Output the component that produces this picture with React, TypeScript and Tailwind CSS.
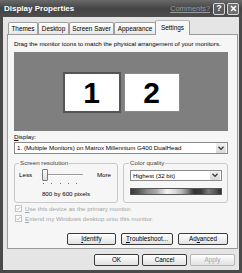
import React from "react";

// Windows XP "Display Properties" dialog, Settings tab (grayscale)

const tabs = [
  { label: "Themes", w: "w-[30px]" },
  { label: "Desktop", w: "w-[31px]" },
  { label: "Screen Saver", w: "w-[45px]" },
  { label: "Appearance", w: "w-[42px]" },
];

const XpButton: React.FC<{ children: React.ReactNode; disabled?: boolean; className?: string }> = ({
  children,
  disabled,
  className = "",
}) => (
  <div
    className={`flex h-[12px] items-center justify-center rounded-[2px] border bg-gradient-to-b from-white to-[#e2e2e2] text-[6.3px] leading-none ${
      disabled ? "border-[#b4b4b4] text-[#a8a8a8]" : "border-[#3a3a3a] text-black"
    } ${className}`}
  >
    {children}
  </div>
);

const DropArrow: React.FC = () => (
  <div className="flex h-full w-[10px] items-center justify-center rounded-[1px] bg-gradient-to-b from-[#f2f2f2] to-[#d6d6d6]">
    <svg width="6" height="5" viewBox="0 0 6 5">
      <path d="M0.5 0.8 L3 3.4 L5.5 0.8" fill="none" stroke="#333" strokeWidth="1.3" />
    </svg>
  </div>
);

const Check: React.FC<{ label: React.ReactNode }> = ({ label }) => (
  <div className="flex h-[9px] items-center gap-[3px] text-[6.2px] text-[#a4a4a4]">
    <div className="flex h-[7px] w-[7px] items-center justify-center border border-[#c4c4c4] bg-white">
      <svg width="5" height="5" viewBox="0 0 5 5">
        <path d="M0.6 2.4 L1.9 3.7 L4.4 1" fill="none" stroke="#b4b4b4" strokeWidth="1" />
      </svg>
    </div>
    <span>{label}</span>
  </div>
);

export default function App() {
  return (
    <div className="flex h-[273px] w-[242px] flex-col overflow-hidden bg-[#4a4a4a] font-['Liberation_Sans',Arial,sans-serif]">
      {/* title bar */}
      <div className="flex h-[17px] items-center bg-gradient-to-b from-[#6a6a6a] via-[#444] to-[#4e4e4e] pl-[4px] pr-[3px]">
        <span className="text-[8px] font-bold text-white">Display Properties</span>
        <span className="ml-auto mr-[3px] text-[7.4px] text-[#9c9c9c] underline">Comments?</span>
        <div className="flex h-[12px] w-[12px] items-center justify-center rounded-[2px] border border-[#d8d8d8] bg-[#5c5c5c] text-[9px] font-bold text-white">
          ?
        </div>
        <div className="ml-[2px] flex h-[12px] w-[12px] items-center justify-center rounded-[2px] border border-[#d8d8d8] bg-[#6e6e6e]">
          <svg width="7" height="7" viewBox="0 0 7 7">
            <path d="M1 1 L6 6 M6 1 L1 6" stroke="white" strokeWidth="1.6" />
          </svg>
        </div>
      </div>

      {/* body */}
      <div className="mx-[3px] mb-[3px] flex h-[253px] flex-col bg-[#e5e5e5] pl-[4px] pr-[1px] pt-[3px]">
        {/* tabs */}
        <div className="relative z-10 flex h-[15px] items-end pl-[1px] text-[6.4px]">
          {tabs.map((t) => (
            <div
              key={t.label}
              className={`${t.w} mb-[1px] flex h-[12px] items-center justify-center rounded-t-[2px] border border-b-0 border-[#a0a0a0] bg-gradient-to-b from-white to-[#e8e8e8] text-black`}
            >
              {t.label}
            </div>
          ))}
          <div className="-ml-[1px] flex h-[15px] w-[35px] items-center justify-center rounded-t-[2px] border border-b-0 border-[#9a9a9a] border-t-[#b8b8b8] bg-[#f6f6f6] pb-[1px] text-black">
            Settings
          </div>
        </div>

        {/* panel */}
        <div className="-mt-[1px] flex h-[215px] flex-col border border-[#9a9a9a] bg-[#f6f6f6] pl-[6px] pr-[9px] pt-[5px]">
          <div className="h-[8px] whitespace-nowrap text-[6.2px] leading-[8px] text-black">
            Drag the monitor icons to match the physical arrangement of your monitors.
          </div>

          <div className="mt-[4px] flex h-[79px] items-center justify-center gap-[3px] bg-[#7f7f7f] pt-[2px]">
            <div className="flex h-[41px] w-[58px] items-center justify-center border-2 border-[#555] bg-white text-[30px] font-bold leading-none text-black">
              1
            </div>
            <div className="flex h-[39px] w-[56px] items-center justify-center border border-[#8a8a8a] bg-white text-[30px] font-bold leading-none text-black">
              2
            </div>
          </div>

          <div className="mt-[2px] h-[8px] text-[6.2px] leading-[8px] text-black">
            <span className="underline">D</span>isplay:
          </div>
          <div className="mt-[1px] flex h-[12px] items-center border border-[#8a8a8a] bg-white pl-[2px] pr-[1px] text-[6.2px] text-black">
            <span>1. (Multiple Monitors) on Matrox Millennium G400 DualHead</span>
            <div className="ml-auto h-[10px]">
              <DropArrow />
            </div>
          </div>

          {/* group boxes */}
          <div className="mt-[9px] flex h-[40px] gap-[5px]">
            <div className="relative flex w-[104px] flex-col rounded-[3px] border border-[#c8c8c8] px-[4px] pt-[5px]">
              <span className="absolute -top-[5px] left-[4px] bg-[#f6f6f6] px-[1px] text-[6.2px] leading-[8px] text-[#444]">
                Screen resolution
              </span>
              <div className="flex h-[12px] items-center text-[6.2px] text-black">
                <span>Less</span>
                <div className="relative ml-[10px] flex h-[12px] w-[41px] items-center">
                  <div className="h-[2px] w-full border-t border-b border-t-[#9a9a9a] border-b-white bg-[#d8d8d8]" />
                  <div className="absolute left-0 top-0 h-[12px] w-[6px] rounded-[1px] border border-[#7a7a7a] bg-gradient-to-b from-white to-[#dcdcdc]" />
                </div>
                <span className="ml-auto mr-[2px]">More</span>
              </div>
              <div className="ml-[24px] mt-[2px] flex h-[1px] w-[34px] justify-between">
                {[0, 1, 2, 3, 4].map((i) => (
                  <div key={i} className="h-[1px] w-[1px] bg-[#666]" />
                ))}
              </div>
              <div className="mt-[6px] h-[8px] text-center text-[6.2px] leading-[8px] text-black">800 by 600 pixels</div>
            </div>

            <div className="relative flex flex-1 flex-col rounded-[3px] border border-[#c8c8c8] pl-[6px] pr-[5px] pt-[6px]">
              <span className="absolute -top-[5px] left-[5px] bg-[#f6f6f6] px-[1px] text-[6.2px] leading-[8px] text-[#444]">
                Color quality
              </span>
              <div className="flex h-[11px] items-center border border-[#8a8a8a] bg-white pl-[2px] pr-[1px] text-[6.2px] text-black">
                <span>Highest (32 bit)</span>
                <div className="ml-auto h-[9px]">
                  <DropArrow />
                </div>
              </div>
              <div className="mt-[7px] h-[7px] border border-[#555] bg-[linear-gradient(to_right,#3a3a3a_0%,#555_8%,#8a8a8a_18%,#a8a8a8_28%,#f4f4f4_40%,#dcdcdc_48%,#b8b8b8_56%,#888_62%,#333_70%,#3c3c3c_78%,#7a7a7a_86%,#555_94%,#2e2e2e_100%)]" />
            </div>
          </div>

          <div className="mt-[1px] pl-[1px]">
            <Check
              label={
                <>
                  <span className="underline">U</span>se this device as the primary monitor.
                </>
              }
            />
            <div className="mt-[1px]">
              <Check
                label={
                  <>
                    <span className="underline">E</span>xtend my Windows desktop onto this monitor.
                  </>
                }
              />
            </div>
          </div>

          <div className="mt-[10px] flex justify-end gap-[5px]">
            <XpButton className="w-[49px]">
              <span className="underline">I</span>dentify
            </XpButton>
            <XpButton className="w-[52px]">
              <span className="underline">T</span>roubleshoot...
            </XpButton>
            <XpButton className="w-[50px]">
              Ad<span className="underline">v</span>anced
            </XpButton>
          </div>
        </div>

        {/* dialog buttons */}
        <div className="mt-[5px] flex justify-end gap-[3px] pr-[3px]">
          <XpButton className="w-[45px]">OK</XpButton>
          <XpButton className="w-[45px]">Cancel</XpButton>
          <XpButton className="w-[45px]" disabled>
            Apply
          </XpButton>
        </div>
      </div>
    </div>
  );
}
